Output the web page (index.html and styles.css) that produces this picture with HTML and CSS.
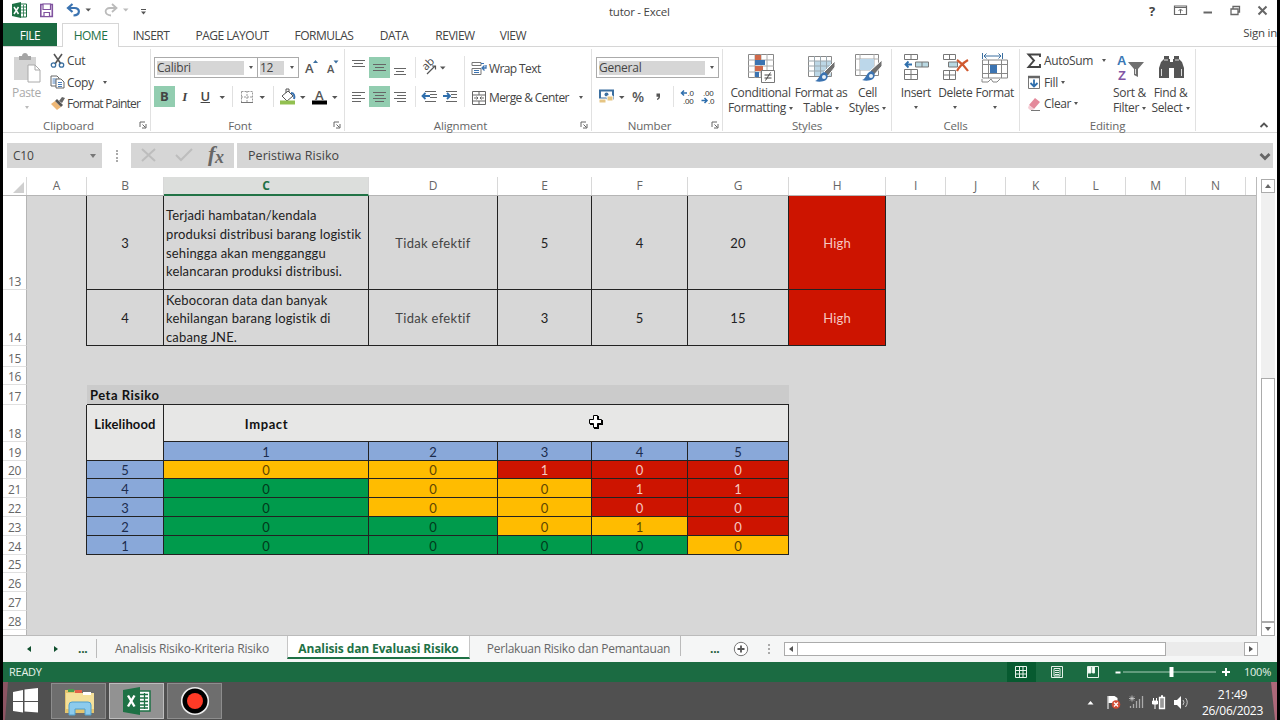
FILE: index.html
```html
<!DOCTYPE html>
<html lang="en">
<head>
  <meta charset="utf-8">
  <title>tutor - Excel</title>
  <link rel="stylesheet" href="styles.css">
</head>
<body>
  <div class="screen">

    <!-- Title bar -->
    <div class="titlebar">
      <div class="quick-access">
        <svg width="200" height="23" viewBox="3 0 200 23">
          <path d="M20 4h6.500v13H20z" fill="#fff" stroke="#1e7145"/>
          <path d="M21 7h5M21 10h5M21 13h5M23.500 5v12" stroke="#1e7145" stroke-width=".8"/>
          <path d="M12 4l9-2v16l-9-2z" fill="#1e7145"/>
          <path d="M14 7l4.500 7M18.500 7L14 14" stroke="#fff" stroke-width="1.500"/>
          <path d="M40.800 4.500h11.500v12H40.800z" fill="#fff" stroke="#80539f" stroke-width="1.600"/>
          <path d="M43 4h7.500v5.500H43zM44 12.500h5.500v4H44z" fill="#fff" stroke="#80539f" stroke-width="1.200"/>
          <path d="M72.500 4l-4.500 4 4.500 4M68.500 8h6c6 0 6 7-1 7.500" fill="none" stroke="#3b73b1" stroke-width="2.200"/>
          <path d="M85.500 8.500h5.500l-2.700 3z" fill="#555"/>
          <path d="M112 4l4.500 4-4.500 4M116 8h-6c-6 0-6 7 1 7.500" fill="none" stroke="#bbb" stroke-width="1.800"/>
          <path d="M123 8.500h5.500l-2.700 3z" fill="#bbb"/>
          <path d="M141 9.500h5" stroke="#555"/>
          <path d="M141 11.500h5l-2.500 3z" fill="#555"/>
        </svg>
      </div>
      <div class="title">tutor - Excel</div>
      <div class="window-buttons">
        <span class="help">?</span>
        <svg width="108" height="23" viewBox="1170 0 108 23" fill="none" stroke="#666">
          <path d="M1175.500 6h12v8.500h-12zM1175 7.500h13" stroke-width="1.200"/>
          <path d="M1181.500 13.500v-4M1179.500 11l2-2 2 2"/>
          <path d="M1204.500 12.500h8.500" stroke-width="2"/>
          <path d="M1232 9h7v5.500h-7zM1234 9V6.500h6.500V12H1239" stroke-width="1.300"/>
          <path d="M1259.500 6.500l8 8M1267.500 6.500l-8 8" stroke-width="2"/>
        </svg>
      </div>
    </div>

    <!-- Ribbon tabs -->
    <div class="tabs">
      <div class="tab file">FILE</div>
      <div class="tab home">HOME</div>
      <div class="tab insert">INSERT</div>
      <div class="tab page">PAGE LAYOUT</div>
      <div class="tab formulas">FORMULAS</div>
      <div class="tab data">DATA</div>
      <div class="tab review">REVIEW</div>
      <div class="tab view">VIEW</div>
      <div class="sign-in">Sign in</div>
    </div>

    <!-- Ribbon -->
    <div class="ribbon">
      <div class="group clipboard">
        <div class="group-body">
          <div class="big-button paste">
            <svg width="30" height="32" viewBox="0 0 30 32">
              <path d="M2 5h22v23H2z" fill="#d4d4d4"/>
              <path d="M7 8V4h3c0-4 6-4 6 0h3v4z" fill="#a5a5a5"/>
              <path d="M16 13h7l5 5v12H16z" fill="#fff" stroke="#aaa"/>
              <path d="M23 13v5h5" fill="none" stroke="#aaa"/>
            </svg>
            <span>Paste</span>
            <i class="arrow light"></i>
          </div>
          <div class="list">
            <div class="item">
              <svg width="16" height="16" viewBox="0 0 16 16" fill="none">
                <path d="M4 1l7 10M12 1L5 11" stroke="#555" stroke-width="1.600"/>
                <circle cx="3.500" cy="12" r="2.200" stroke="#3b6fa0" stroke-width="1.300"/>
                <circle cx="11.500" cy="12" r="2.200" stroke="#3b6fa0" stroke-width="1.300"/>
              </svg>
              <span>Cut</span>
            </div>
            <div class="item">
              <svg width="16" height="16" viewBox="0 0 16 16">
                <path d="M1 2h6l2 2v8H1z" fill="#fff" stroke="#666"/>
                <path d="M2.500 5h4M2.500 7h4M2.500 9h4" stroke="#4a7ebb"/>
                <path d="M6 5h5l3 3v6H6z" fill="#fff" stroke="#666"/>
                <path d="M8 8.500h4M8 10.500h4M8 12.500h4" stroke="#4a7ebb"/>
              </svg>
              <span>Copy</span>
              <i class="arrow"></i>
            </div>
            <div class="item">
              <svg width="16" height="16" viewBox="0 0 16 16">
                <path d="M1 8l4-3 6 6-4 3z" fill="#eeb877"/>
                <path d="M5 5l2-2 6 6-2 2z" fill="#555"/>
                <path d="M9 5l3-4 3 1-3 5z" fill="#666"/>
              </svg>
              <span class="painter">Format Painter</span>
            </div>
          </div>
        </div>
        <div class="group-label">Clipboard</div>
        <svg class="launcher" width="8" height="8"><path d="M1 6V1h5M3.500 3.500l3 3M7 3v4H3" fill="none" stroke="#666"/></svg>
      </div>

      <div class="group font">
        <div class="group-body rows">
          <div class="line">
            <div class="combo font-name"><span>Calibri</span><i class="arrow"></i></div>
            <div class="combo font-size"><span>12</span><i class="arrow"></i></div>
            <svg width="42" height="21" viewBox="0 0 42 21">
              <text x="6" y="16" class="glyph-a">A</text>
              <path d="M14 6h5l-2.500-3z" fill="#3b6fa0"/>
              <text x="28" y="16" class="glyph-a small">A</text>
              <path d="M34.500 3.500h5L37 6.500z" fill="#3b6fa0"/>
            </svg>
          </div>
          <div class="line">
            <span class="toggle on bold">B</span>
            <span class="toggle italic">I</span>
            <span class="toggle underline">U</span>
            <svg width="122" height="21" viewBox="215 86 122 21">
              <path d="M218.500 96h5.500l-2.700 3zM258.500 96h5.500l-2.700 3zM299 96h5.500l-2.700 3zM331 96h5.500l-2.700 3z" fill="#555"/>
              <path d="M231.500 86v21M272.500 86v21" stroke="#e0e0e0"/>
              <path d="M240.500 91.500h11v11h-11zM246 91v12M240 97h12" fill="none" stroke="#999" stroke-dasharray="2 1"/>
              <path d="M240 102.500h12" stroke="#777"/>
              <path d="M281 96l6-5 5 5-6 5z" fill="#fff" stroke="#555"/>
              <path d="M285 93v-4h3v3" fill="none" stroke="#555"/>
              <path d="M290 93c3 0 4 3 3 6" fill="none" stroke="#3b73b1" stroke-width="2"/>
              <path d="M279 100.500h15v4h-15z" fill="#92c050"/>
              <path d="M311 100.500h15v4h-15z" fill="#000"/>
              <text x="314" y="100" class="glyph-a">A</text>
            </svg>
          </div>
        </div>
        <div class="group-label">Font</div>
        <svg class="launcher" width="8" height="8"><path d="M1 6V1h5M3.500 3.500l3 3M7 3v4H3" fill="none" stroke="#666"/></svg>
      </div>

      <div class="group alignment">
        <div class="group-body">
          <svg width="126" height="60" viewBox="345 49 126 60">
            <path d="M369 57h21v21h-21zM369 86h21v21h-21z" fill="#92cdb0"/>
            <g stroke="#666">
              <path d="M352 60.500h13M354 63.500h9M352 66.500h13"/>
              <path d="M373 64.500h13M375 67.500h9M373 70.500h13"/>
              <path d="M394 68.500h12M396 71.500h8M394 74.500h12"/>
              <path d="M352 92.500h13M352 95.500h9M352 98.500h13M352 101.500h9"/>
              <path d="M373 92.500h13M375 95.500h9M373 98.500h13M375 101.500h9"/>
              <path d="M394 92.500h12M397 95.500h9M394 98.500h12M397 101.500h9"/>
              <path d="M425 91.500h11M430 94.500h7M430 97.500h7M425 101.500h11"/>
              <path d="M446 91.500h11M451 94.500h6M451 97.500h6M446 101.500h11"/>
            </g>
            <path d="M415.500 57v21M415.500 86v21M464.500 56v51" stroke="#e2e2e2"/>
            <text x="0" y="0" class="glyph-ab" transform="translate(426 71) rotate(-45)">ab</text>
            <path d="M427 74l8-8M432 66h3.500v3.500" fill="none" stroke="#555" stroke-width="1.200"/>
            <path d="M440 66.500h5.500l-2.700 3z" fill="#555"/>
            <path d="M430 96h-7M425.500 93l-3 3 3 3M443 96h7M447 93l3 3-3 3" fill="none" stroke="#2f6fad" stroke-width="1.800"/>
          </svg>
          <div class="list wide">
            <div class="item">
              <svg width="17" height="18" viewBox="0 0 17 18" fill="none">
                <path d="M1 2.500h9v3H1zM1 8.500h9v6H1z" stroke="#777"/>
                <path d="M3 10.500h5M3 12.500h5M10 3.500h3" stroke="#3b73b1"/>
                <path d="M15 5v3h-4M13.500 5.500L11 8l2.500 2.500" stroke="#3b73b1" stroke-width="1.300"/>
              </svg>
              <span>Wrap Text</span>
            </div>
            <div class="item">
              <svg width="17" height="18" viewBox="0 0 17 18" fill="none" stroke="#666">
                <path d="M1.500 2.500h13v13h-13zM1.500 6h13M1.500 12h13M8 2.500V6M8 12v3.500"/>
                <path d="M3 9h4M13 9H9M5.500 7.500L7 9l-1.500 1.500M10.500 7.500L9 9l1.500 1.500"/>
              </svg>
              <span class="merge">Merge &amp; Center</span>
              <i class="arrow"></i>
            </div>
          </div>
        </div>
        <div class="group-label">Alignment</div>
        <svg class="launcher" width="8" height="8"><path d="M1 6V1h5M3.500 3.500l3 3M7 3v4H3" fill="none" stroke="#666"/></svg>
      </div>

      <div class="group number">
        <div class="group-body rows">
          <div class="line">
            <div class="combo format"><span>General</span><i class="arrow"></i></div>
          </div>
          <div class="line">
            <svg width="122" height="21" viewBox="596 86 122 21">
              <path d="M600 90.500h13v8h-13z" fill="#fff" stroke="#3b6fa0" stroke-width="2"/>
              <circle cx="606.500" cy="94.500" r="2" fill="#3b6fa0"/>
              <path d="M599 99h7v4h-7zM607 96h6v5h-6z" fill="#e6c583" stroke="#fff"/>
              <path d="M619 96h5.500l-2.700 3z" fill="#555"/>
              <text x="632" y="102" class="percent">%</text>
              <path d="M656.500 93.500h3.500v3q0 2.500-3 3.500v-1.200q1.500-.6 1.500-2h-2z" fill="#555"/>
              <path d="M673.500 86v21" stroke="#e2e2e2"/>
              <text x="687.500" y="96" class="digits">.0</text>
              <text x="683" y="104" class="digits">.00</text>
              <text x="703" y="96" class="digits">.00</text>
              <text x="708" y="104" class="digits">.0</text>
              <path d="M687 93h-5M684 90.500L681.500 93l2.500 2.500M701.500 100.500h5M704.500 98l2.500 2.500-2.500 2.500" fill="none" stroke="#2f6fad" stroke-width="1.500"/>
            </svg>
          </div>
        </div>
        <div class="group-label">Number</div>
        <svg class="launcher" width="8" height="8"><path d="M1 6V1h5M3.500 3.500l3 3M7 3v4H3" fill="none" stroke="#666"/></svg>
      </div>

      <div class="group styles">
        <div class="group-body">
          <div class="big-button conditional">
            <svg width="30" height="32" viewBox="0 0 30 32">
              <path d="M2.500 2.500h25v23h-25z" fill="#fff" stroke="#888"/>
              <path d="M2 8h26M2 14h26M2 20h26M9 2v24M15 2v24M21 2v24" stroke="#aaa"/>
              <path d="M9 3h6v5H9zM9 14h8v5H9z" fill="#d0694a"/>
              <path d="M9 8h10v5H9zM9 20h4v5H9z" fill="#3b73b1"/>
              <path d="M15.500 18.500h13v12h-13z" fill="#fff" stroke="#777"/>
              <path d="M18.500 23h7M18.500 26h7M24.500 20.500l-5 8" stroke="#444"/>
            </svg>
            <span>Conditional<br>Formatting<i class="arrow"></i></span>
          </div>
          <div class="big-button as-table">
            <svg width="30" height="32" viewBox="0 0 30 32">
              <path d="M2.500 4.500h23v20h-23z" fill="#fff" stroke="#888"/>
              <path d="M9 9h16v15H9z" fill="#bcd7e6"/>
              <path d="M2 9h24M2 14h24M2 19h24M8.500 4v20M14.500 4v20M20.500 4v20" stroke="#9aa7ae"/>
              <path d="M29 9v6l-7 9-4-4z" fill="#707070" stroke="#fff"/>
              <path d="M18 20c4 1 5 5 2 8-3 2-8 2-11 1 4-1 4-7 9-9z" fill="#3b73b1"/>
              <circle cx="18" cy="25" r="2" fill="#e8f1f8"/>
            </svg>
            <span>Format as<br>Table<i class="arrow"></i></span>
          </div>
          <div class="big-button cell-styles">
            <svg width="30" height="32" viewBox="0 0 30 32">
              <path d="M2.500 2.500h23v21h-23z" fill="#fff" stroke="#888"/>
              <path d="M2 7h24M2 18h24M7 2v22M21 2v22" stroke="#aaa"/>
              <path d="M7 7h14v11H7z" fill="#bcd7ea"/>
              <path d="M29 8v6l-8 9-4-4z" fill="#707070" stroke="#fff"/>
              <path d="M18 19c4 1 5 5 2 8-3 2-8 2-11 1 4-1 4-7 9-9z" fill="#3b73b1"/>
              <circle cx="18" cy="24" r="2" fill="#e8f1f8"/>
            </svg>
            <span>Cell<br>Styles<i class="arrow"></i></span>
          </div>
        </div>
        <div class="group-label">Styles</div>
      </div>

      <div class="group cells">
        <div class="group-body">
          <div class="big-button">
            <svg width="30" height="32" viewBox="0 0 30 32" fill="none" stroke="#777">
              <path d="M3.500 2.500h13v5h-13zM10 2.500v5M3.500 17.500h13v10h-13zM3.500 22.500h13M10 17.500v10"/>
              <path d="M14.500 10h13v5h-13z" fill="#b9d8e2"/><path d="M21 10v5"/>
              <path d="M11 12.500H4.500M7.500 9.500l-3 3 3 3" stroke="#2f6fad" stroke-width="1.800"/>
            </svg>
            <span>Insert</span>
            <i class="arrow"></i>
          </div>
          <div class="big-button">
            <svg width="30" height="32" viewBox="0 0 30 32" fill="none" stroke="#777">
              <path d="M3.500 2.500h12v5h-12zM9.500 2.500v5M3.500 18.500h12v9h-12zM3.500 23h12M9.500 18.500v9"/>
              <path d="M8.500 10h9v5h-9z" fill="#b9d8e2"/>
              <path d="M17 8c3 2 9 8 11 11M28 8c-5 3-9 7-11 11" stroke="#d0592f" stroke-width="2.200"/>
            </svg>
            <span>Delete</span>
            <i class="arrow"></i>
          </div>
          <div class="big-button">
            <svg width="30" height="32" viewBox="0 0 30 32" fill="none" stroke="#888">
              <path d="M2.500 8h25v18h-25zM2.500 12.500h25M2.500 21.500h25M8.500 8v18M21.500 8v18"/>
              <path d="M10 13h7v8h-7z" fill="#3b73b1" stroke="none"/>
              <path d="M2 27v3h6l3-3 2 3h4l3-3"/>
              <path d="M2.500 1v6M22.500 1v6M4 4h17M6.500 1.500L4 4l2.500 2.500M18.500 1.500L21 4l-2.500 2.500" stroke="#3b6fa0"/>
            </svg>
            <span>Format</span>
            <i class="arrow"></i>
          </div>
        </div>
        <div class="group-label">Cells</div>
      </div>

      <div class="group editing">
        <div class="group-body">
          <div class="list">
            <div class="item">
              <svg width="16" height="16" viewBox="0 0 16 16"><path d="M14 4V1.500H2.500L8 7.500l-5.500 6.500H14v-3" fill="none" stroke="#444" stroke-width="1.900"/></svg>
              <span class="autosum">AutoSum</span>
              <i class="arrow"></i>
            </div>
            <div class="item">
              <svg width="16" height="16" viewBox="0 0 16 16" fill="none">
                <path d="M2.500 2.500h11v12h-11z" stroke="#777"/><path d="M2 3h12" stroke="#666" stroke-width="2.500"/>
                <path d="M8 5.500v7M4.500 9L8 12.500 11.500 9" stroke="#2f6fad" stroke-width="1.800"/>
              </svg>
              <span>Fill</span>
              <i class="arrow near"></i>
            </div>
            <div class="item">
              <svg width="16" height="16" viewBox="0 0 16 16">
                <path d="M3 9l6-7 5 4-6 7z" fill="#e4899b"/><path d="M3 9l5 4-1 1H4l-2-2z" fill="#f6cdd5"/>
                <path d="M5 14.500h9" stroke="#777"/>
              </svg>
              <span>Clear</span>
              <i class="arrow near"></i>
            </div>
          </div>
          <div class="big-button sort">
            <svg width="30" height="32" viewBox="0 0 30 32">
              <text x="2" y="13" class="sort-letter a">A</text>
              <text x="3" y="28" class="sort-letter z">Z</text>
              <path d="M13 10h16l-6 7v8l-4-2v-6z" fill="#707070"/>
              <path d="M20.500 17v5" stroke="#ddd"/>
            </svg>
            <span>Sort &amp;<br>Filter<i class="arrow"></i></span>
          </div>
          <div class="big-button find">
            <svg width="30" height="32" viewBox="0 0 30 32">
              <path d="M8 4h5v3h1v3h3V7h1V4h5v3l3 3 2 6v10H18V16h-5v10H3V16l2-6 3-3z" fill="#555"/>
              <path d="M5.500 17v7M25.500 17v7M8 8h4M19 8h4" stroke="#ddd"/>
            </svg>
            <span>Find &amp;<br>Select<i class="arrow"></i></span>
          </div>
        </div>
        <div class="group-label">Editing</div>
      </div>
      <svg class="collapse" width="10" height="8"><path d="M1.500 6L5 2.500 8.500 6" fill="none" stroke="#555" stroke-width="1.800"/></svg>
    </div>

    <!-- Formula bar -->
    <div class="formula-bar">
      <div class="name-box"><span>C10</span><i class="arrow big"></i></div>
      <div class="dots"></div>
      <div class="fx">
        <svg width="69" height="24" viewBox="0 0 69 24" fill="none" stroke="#bdbdbd" stroke-width="2">
          <path d="M3 6l13 12M16 6L3 18M37 12l5 5L53 6"/>
        </svg>
        <span>f<sub>x</sub></span>
      </div>
      <div class="formula-input">
        <span>Peristiwa Risiko</span>
        <svg width="12" height="10"><path d="M1.500 3L6 7.500 10.500 3" fill="none" stroke="#666" stroke-width="2.800"/></svg>
      </div>
    </div>

    <!-- Worksheet -->
    <div class="sheet">
      <div class="grid">
        <div class="col-heads">
          <div class="corner"><svg width="11" height="11"><path d="M11 0v11H0z" fill="#cfcfcf"/></svg></div>
          <div class="a">A</div><div class="b">B</div><div class="c selected">C</div><div class="d">D</div>
          <div class="e">E</div><div class="f">F</div><div class="g">G</div><div class="h">H</div>
          <div class="i">I</div><div class="i">J</div><div class="i">K</div><div class="i">L</div><div class="i">M</div><div class="i">N</div>
        </div>
        <div class="row r13">
          <div class="num">13</div><div class="a edge"></div>
          <div class="cell b">3</div>
          <div class="cell c text">Terjadi hambatan/kendala<br>produksi distribusi barang logistik<br>sehingga akan mengganggu<br>kelancaran produksi distribusi.</div>
          <div class="cell d soft">Tidak efektif</div><div class="cell e">5</div><div class="cell f">4</div><div class="cell g">20</div><div class="cell h red">High</div>
        </div>
        <div class="row r14">
          <div class="num">14</div><div class="a edge"></div>
          <div class="cell b">4</div>
          <div class="cell c text">Kebocoran data dan banyak<br>kehilangan barang logistik di<br>cabang JNE.</div>
          <div class="cell d soft">Tidak efektif</div><div class="cell e">3</div><div class="cell f">5</div><div class="cell g">15</div><div class="cell h red">High</div>
        </div>
        <div class="row r15"><div class="num">15</div></div>
        <div class="row short"><div class="num">16</div></div>
        <div class="row r17">
          <div class="num">17</div><div class="a"></div>
          <div class="map-title">Peta Risiko</div>
        </div>
        <div class="row r18">
          <div class="num">18</div><div class="a edge"></div>
          <div class="cell b head open">Likelihood</div><div class="cell c head no-right">Impact</div><div class="cell head rest"></div>
        </div>
        <div class="row">
          <div class="num">19</div><div class="a edge"></div>
          <div class="cell b head"></div><div class="cell c blue">1</div><div class="cell d blue">2</div><div class="cell e blue">3</div><div class="cell f blue">4</div><div class="cell g blue">5</div>
        </div>
        <div class="row short">
          <div class="num">20</div><div class="a edge"></div>
          <div class="cell b blue">5</div><div class="cell c yellow">0</div><div class="cell d yellow">0</div><div class="cell e red">1</div><div class="cell f red">0</div><div class="cell g red">0</div>
        </div>
        <div class="row">
          <div class="num">21</div><div class="a edge"></div>
          <div class="cell b blue">4</div><div class="cell c green">0</div><div class="cell d yellow">0</div><div class="cell e yellow">0</div><div class="cell f red">1</div><div class="cell g red">1</div>
        </div>
        <div class="row">
          <div class="num">22</div><div class="a edge"></div>
          <div class="cell b blue">3</div><div class="cell c green">0</div><div class="cell d yellow">0</div><div class="cell e yellow">0</div><div class="cell f red">0</div><div class="cell g red">0</div>
        </div>
        <div class="row">
          <div class="num">23</div><div class="a edge"></div>
          <div class="cell b blue">2</div><div class="cell c green">0</div><div class="cell d green">0</div><div class="cell e yellow">0</div><div class="cell f yellow">1</div><div class="cell g red">0</div>
        </div>
        <div class="row">
          <div class="num">24</div><div class="a edge"></div>
          <div class="cell b blue">1</div><div class="cell c green">0</div><div class="cell d green">0</div><div class="cell e green">0</div><div class="cell f green">0</div><div class="cell g yellow">0</div>
        </div>
        <div class="row short"><div class="num">25</div></div>
        <div class="row"><div class="num">26</div></div>
        <div class="row"><div class="num">27</div></div>
        <div class="row"><div class="num">28</div></div>
        <div class="row last"><div class="num"></div></div>
        <svg class="cursor" width="16" height="16" viewBox="0 0 16 16">
          <path d="M6 2h5v4h4v5h-4v4H6v-4H2V6h4z" fill="#000"/>
          <path d="M5.500 1.500h4v4h4v4h-4v4h-4v-4h-4v-4h4z" fill="#fff" stroke="#000"/>
        </svg>
      </div>
      <div class="vscroll">
        <div class="scroll-button"><i class="up"></i></div>
        <div class="track"></div>
        <div class="thumb"></div>
        <div class="scroll-button"><i class="down"></i></div>
      </div>
    </div>

    <!-- Sheet tabs -->
    <div class="sheet-tabs">
      <div class="nav">
        <i class="left"></i><i class="right"></i><b>...</b>
      </div>
      <div class="sheet-tab first">Analisis Risiko-Kriteria Risiko</div>
      <div class="sheet-tab active">Analisis dan Evaluasi Risiko</div>
      <div class="sheet-tab third">Perlakuan Risiko dan Pemantauan</div>
      <b class="more">...</b>
      <svg class="add" width="16" height="16"><circle cx="8" cy="8" r="6.700" fill="#fff" stroke="#777"/><path d="M4.500 8h7M8 4.500v7" stroke="#555" stroke-width="1.800"/></svg>
      <div class="dots"></div>
      <div class="hscroll">
        <div class="scroll-button"><i class="left"></i></div>
        <div class="hthumb"></div>
        <div class="scroll-button"><i class="right"></i></div>
      </div>
    </div>

    <!-- Status bar -->
    <div class="status-bar">
      <span>READY</span>
      <svg width="230" height="20" viewBox="1007 662 230 20" fill="none" stroke="#e6f2ea">
        <path d="M1007 662h29v20h-29z" fill="#075a30" stroke="none"/>
        <path d="M1015.500 666.500h11v11h-11zM1019.500 666v12M1023 666v12M1015 670.500h12M1015 674h12"/>
        <path d="M1051.500 666.500h11v11h-11zM1054 668.500h6v7.500h-6zM1055 670.500h4M1055 672.500h4M1055 674.500h4"/>
        <path d="M1087.500 666.500h11v11h-11z"/><path d="M1088 667h3v6h-3zM1092.500 667h2v6h-2z" fill="#fff"/>
        <path d="M1115.500 672.500h5" stroke="#fff" stroke-width="2"/><path d="M1123 672h93" stroke="#a9cdb8"/>
        <path d="M1169.500 667h4v10h-4z" fill="#fff" stroke="none"/>
        <path d="M1222 672h8M1226 668v8" stroke="#fff" stroke-width="2"/>
      </svg>
      <span class="zoom">100%</span>
    </div>

    <!-- Taskbar -->
    <div class="taskbar">
      <svg class="start" width="48" height="38" viewBox="3 682 48 38">
        <path d="M3 682h5l-3 38H3z" fill="#8c5563"/>
        <path d="M13 692l10-2v11H13zM24.500 689.500L38 688v13H24.500zM13 702h10v10.500L13 711zM24.500 702H38v10.500l-13.500-1z" fill="#fff"/>
      </svg>
      <div class="task">
        <svg width="32" height="32" viewBox="0 0 32 32">
          <path d="M2 5h9l2 3h18v20H2z" fill="#e5c56d"/>
          <path d="M3 8h28v16H3z" fill="#f4e09a"/>
          <path d="M5 4h6v3H5z" fill="#4c9d50"/><path d="M12 5h7v3h-7z" fill="#e36148"/><path d="M20 7h8v3h-8z" fill="#fff"/>
          <path d="M6 30V20q0-3 3-3h16q3 0 3 3v10h-6v-6h-10v6z" fill="#8ccbed" stroke="#4e9fce"/>
        </svg>
      </div>
      <div class="task current">
        <svg width="32" height="32" viewBox="0 0 32 32">
          <path d="M17 6h12v20H17z" fill="#fff" stroke="#1e7145" stroke-width="1.500"/>
          <path d="M19 9.500h8M19 13h8M19 16.500h8M19 20h8M19 23h8M23.500 8v16" stroke="#1e7145" stroke-width="1.300"/>
          <path d="M2 5l17-3v28L2 27z" fill="#1e7145"/>
          <path d="M7 10.500l6.500 11M13.500 10.500L7 21.500" stroke="#fff" stroke-width="2.400"/>
        </svg>
      </div>
      <div class="task">
        <svg width="32" height="32" viewBox="0 0 32 32">
          <circle cx="16" cy="16" r="13.300" fill="#000" stroke="#eee" stroke-width="1.600"/>
          <circle cx="16" cy="16" r="8" fill="#ff3a26"/>
        </svg>
      </div>
      <svg class="tray" width="110" height="38" viewBox="1084 682 110 38">
        <path d="M1087.500 704.500h6l-3-3.500z" fill="#fff"/>
        <path d="M1108 696v13" stroke="#fff"/><path d="M1108.500 696h6l3 2v5h-9z" fill="#fff"/>
        <circle cx="1116" cy="704.500" r="4.300" fill="#d24c34"/><path d="M1114 702.500l4 4M1118 702.500l-4 4" stroke="#fff" stroke-width="1.300"/>
        <path d="M1130.500 706v2M1133.500 704v4M1136.500 701v7M1139.500 699v9M1142.500 696v12" stroke="#aaa" stroke-width="1.300"/>
        <path d="M1129 698.500h6M1132 695.500v6M1130 696.500l4 4M1134 696.500l-4 4" stroke="#ccc" stroke-width=".8"/>
        <path d="M1159.500 697.500h5v11h-5zM1161 696h2" fill="#999" stroke="#fff" stroke-width="1.300"/>
        <path d="M1152.500 701h5v3h-5zM1155 704v5M1153.500 698v3M1156.500 698v3" fill="#fff" stroke="#fff"/>
        <path d="M1174 700h3l4-4v13l-4-4h-3z" fill="#fff"/>
        <path d="M1183 700q2 2 0 5M1185.500 698q3.500 4 0 9" fill="none" stroke="#ccc"/>
      </svg>
      <div class="clock">21:49<br>26/06/2023</div>
      <svg class="corner-edge" width="6" height="38"><path d="M0 0h6v38H4z" fill="#ad6879"/></svg>
    </div>
  </div>
</body>
</html>
```

FILE: styles.css
```css
* {
  box-sizing: border-box;
}

body {
  margin: 0;
  width: 1280px;
  height: 720px;
  overflow: hidden;
  background: #000;
  font-family: 'Open Sans', 'Noto Sans', sans-serif;
  font-size: 12px;
  letter-spacing: -0.25px;
  color: #444;
}

.screen {
  width: 1274px;
  height: 720px;
  margin-left: 3px;
  background: #fff;
  display: flex;
  flex-direction: column;
  white-space: nowrap;
}

svg {
  display: block;
  flex: none;
}

.arrow {
  display: inline-block;
  flex: none;
  border: 2.5px solid transparent;
  border-top: 3px solid #555;
  border-bottom: 0;
  vertical-align: 2px;
}

.arrow.light {
  border-top-color: #bbb;
}

.arrow.big {
  border-width: 4px 3.5px 0;
  border-top-color: #777;
}

/* Title bar */
.titlebar {
  height: 23px;
  display: flex;
}

.title {
  flex: 1;
  padding-left: 406px;
  line-height: 24px;
  font-size: 11.5px;
}

.window-buttons {
  display: flex;
  font-weight: 700;
  font-size: 13px;
  line-height: 22px;
}

.help {
  width: 20px;
}

/* Ribbon tabs */
.tabs {
  height: 24px;
  display: flex;
  border-bottom: 1px solid #d6d6d6;
  line-height: 25px;
}

.tab {
  text-align: center;
  letter-spacing: -0.5px;
}

.tab.file {
  width: 54px;
  margin-right: 5px;
  background: #1b6b42;
  color: #fff;
}

.tab.home {
  width: 57px;
  height: 24px;
  border: 1px solid #d6d6d6;
  border-bottom: 0;
  background: #fff;
  color: #1e7145;
  line-height: 23px;
}

.tab.insert { width: 64px; }
.tab.page { width: 98px; }
.tab.formulas { width: 86px; }
.tab.data { width: 54px; }
.tab.review { width: 68px; }
.tab.view { width: 48px; }

.sign-in {
  margin-left: auto;
  font-size: 11.5px;
  line-height: 20px;
}

/* Ribbon */
.ribbon {
  height: 87px;
  display: flex;
  border-bottom: 1px solid #d6d6d6;
  position: relative;
}

.group {
  height: 82px;
  margin-top: 2px;
  border-right: 1px solid #e1e1e1;
  position: relative;
}

.clipboard { width: 148px; }
.font { width: 194px; }
.alignment { width: 247px; }
.number { width: 131px; }
.styles { width: 169px; }
.cells { width: 128px; }
.editing { width: 176px; }

.group-body {
  height: 69px;
  display: flex;
}

.group-body.rows {
  flex-direction: column;
  gap: 8px;
  padding: 8px 0 0 3px;
}

.group-body.rows .line:last-child {
  height: 21px;
}

.number .group-body.rows {
  padding-left: 4px;
}

.group-label {
  height: 14px;
  line-height: 16px;
  text-align: center;
  color: #666;
  font-size: 11.5px;
  letter-spacing: -0.15px;
}

.clipboard .group-label {
  padding-right: 16px;
}

.font .group-label,
.alignment .group-label,
.number .group-label {
  padding-right: 15px;
}

.launcher {
  position: absolute;
  right: 3px;
  bottom: 2px;
}

.big-button {
  display: flex;
  flex-direction: column;
  align-items: center;
  text-align: center;
  line-height: 15px;
  padding-top: 3px;
}

.big-button > span {
  margin-top: 1px;
  letter-spacing: -0.35px;
}

.big-button span .arrow {
  margin-left: 3px;
}

.big-button > .arrow {
  margin-top: 6px;
}

.paste {
  width: 47px;
  color: #aaa;
}

.list {
  padding-top: 1px;
}

.item {
  display: flex;
  align-items: center;
  height: 21.5px;
  letter-spacing: -0.35px;
}

.item span {
  margin-left: 1px;
}

.item .painter {
  letter-spacing: -0.75px;
}

.item .arrow {
  margin-left: 9px;
}

.item .arrow.near {
  margin-left: 3px;
}

.list.wide {
  padding-top: 5px;
}

.list.wide .item {
  height: 29px;
  letter-spacing: -0.6px;
}

.list.wide .item .arrow {
  margin-left: 10px;
}

.line {
  height: 21px;
  display: flex;
}

.combo {
  height: 21px;
  border: 1px solid #ababab;
  display: flex;
  align-items: center;
  justify-content: space-between;
  padding-right: 4px;
}

.combo span {
  height: 14px;
  line-height: 14px;
  background: #d6d6d6;
  margin-left: 2px;
}

.font-name { width: 104px; }
.font-name span { width: 87px; }
.font-size { width: 42px; margin-left: -1px; }
.font-size span { width: 24px; }
.format { width: 123px; }
.format span { width: 106px; }

.toggle {
  width: 20.5px;
  height: 21px;
  line-height: 21px;
  text-align: center;
  font-size: 13px;
}

.toggle.on {
  background: #92cdb0;
}

.bold {
  font-weight: 700;
}

.italic {
  font-family: 'Liberation Serif', serif;
  font-style: italic;
  font-weight: 700;
}

.underline {
  text-decoration: underline;
  font-weight: 600;
}

.glyph-a {
  font-size: 13px;
  font-weight: 600;
  fill: #555;
}

.glyph-a.small {
  font-size: 11px;
}

.glyph-ab {
  font-size: 11px;
  fill: #444;
}

.percent {
  font-size: 14px;
  font-weight: 600;
  fill: #555;
}

.digits {
  font-family: 'Liberation Sans', sans-serif;
  font-size: 8px;
  font-weight: 400;
  fill: #333;
}

.conditional { width: 75px; }
.as-table { width: 46px; }
.cell-styles { width: 47px; }
.cells .group-body { padding-left: 4px; }
.cells .big-button { width: 39.5px; }
.editing .list { width: 87px; padding-left: 6px; }
.editing .item span { margin-left: 2px; }
.sort { width: 45px; }
.find { width: 37px; }

.sort-letter {
  font-family: 'Liberation Sans', sans-serif;
  font-size: 13px;
  font-weight: 700;
}

.sort-letter.a { fill: #3b78b5; }
.sort-letter.z { fill: #8257a5; }

.collapse {
  position: absolute;
  right: 8px;
  bottom: 3px;
}

/* Formula bar */
.formula-bar {
  height: 44px;
  padding: 10px 0 9px 4px;
  display: flex;
  line-height: 26px;
}

.name-box {
  width: 95px;
  background: #d6d6d6;
  display: flex;
  align-items: center;
  justify-content: space-between;
  padding: 0 6px;
}

.dots {
  width: 2px;
  height: 12px;
  margin: 7px 13px 0 14px;
  border-left: 2px dotted #aaa;
}

.fx {
  width: 103px;
  background: #d6d6d6;
  display: flex;
  padding-left: 8px;
}

.fx span {
  font: italic 700 22px/22px 'Liberation Serif', serif;
  color: #666;
}

.fx sub {
  font-size: 18px;
  vertical-align: -2px;
}

.formula-input {
  flex: 1;
  margin: 0 4px 0 3px;
  padding: 0 2px 0 11px;
  background: #d6d6d6;
  display: flex;
  justify-content: space-between;
  align-items: center;
  letter-spacing: 0.05px;
}

.formula-input span {
  font-size: 12.5px;
}

/* Worksheet */
.sheet {
  height: 459px;
  display: flex;
}

.grid {
  width: 1254px;
  height: 459px;
  background: #d7d7d7;
  border-right: 1px solid #bbb;
  border-bottom: 1px solid #bbb;
  position: relative;
  overflow: hidden;
}

.col-heads {
  height: 19px;
  display: flex;
  background: #fff;
  border-bottom: 1px solid #b5b5b5;
  color: #666;
  line-height: 18px;
  text-align: center;
}

.col-heads div {
  border-right: 1px solid #d8d8d8;
}

.col-heads .corner {
  width: 24px;
  padding: 5px 0 0 10px;
}

.col-heads .selected {
  height: 19px;
  background: #dcdedc;
  border-bottom: 2px solid #217346;
  color: #1e7145;
  font-weight: 700;
}

.a { width: 60px; }
.b { width: 77px; }
.c { width: 205px; }
.d { width: 129px; }
.e { width: 94px; }
.f { width: 96px; }
.g { width: 101px; }
.h { width: 97px; }
.i { width: 60px; }

.row {
  height: 19px;
  display: flex;
}

.row.r13 { height: 94px; }
.row.r14 { height: 56px; }
.row.r15 { height: 21px; }
.row.r17 { height: 20px; }
.row.r18 { height: 37px; }
.row.short { height: 18px; }
.row.last { height: 6px; }

.num {
  width: 24px;
  background: #fff;
  border-right: 1px solid #b5b5b5;
  border-bottom: 1px solid #e0e0e0;
  color: #666;
  display: flex;
  align-items: flex-end;
  justify-content: center;
  line-height: 15px;
}

.edge {
  border-right: 1px solid #222;
}

.cell {
  padding-top: 2px;
  border-right: 1px solid #222;
  border-bottom: 1px solid #222;
  display: flex;
  align-items: center;
  justify-content: center;
  font-family: Lato, 'Liberation Sans', sans-serif;
  font-size: 13px;
  letter-spacing: 0.15px;
  line-height: 18.7px;
  color: #222;
}

.cell.text {
  justify-content: flex-start;
  padding-left: 2px;
}

.cell.soft {
  color: #444;
  letter-spacing: 0.3px;
}

.cell.head {
  background: #e7e7e6;
  color: #111;
  font-weight: 700;
}

.cell.open { border-bottom: 0; }
.cell.no-right { border-right: 0; letter-spacing: 0.6px; }
.cell.rest { width: 420px; }

.cell.blue { background: #89a8d9; color: #1c2c4d; }
.cell.yellow { background: #ffbc00; color: #5e4500; }
.cell.green { background: #009b4c; color: #00391b; }
.cell.red { background: #cd1400; color: #f6c8c2; }

.map-title {
  width: 702px;
  padding-left: 3px;
  background: #cbcbcb;
  border-bottom: 1px solid #222;
  font: 700 13px/21px Lato, sans-serif;
  letter-spacing: 0.5px;
  color: #111;
}

.cursor {
  position: absolute;
  left: 585px;
  top: 237px;
}

.vscroll {
  width: 20px;
  padding: 2px 2px 0 4px;
  display: flex;
  flex-direction: column;
}

.scroll-button {
  width: 14px;
  height: 14px;
  border: 1px solid #ababab;
  background: #fff;
  display: flex;
  align-items: center;
  justify-content: center;
}

.up, .down, .left, .right {
  border: 3px solid transparent;
}

.up { border-bottom: 4px solid #666; border-top: 0; }
.down { border-top: 4px solid #666; border-bottom: 0; }
.left { border-right: 4px solid #555; border-left: 0; }
.right { border-left: 4px solid #555; border-right: 0; }

.track {
  height: 185px;
  background: #f0f0f0;
}

.thumb {
  height: 245px;
  border: 1px solid #ababab;
  background: #fff;
}

/* Sheet tabs */
.sheet-tabs {
  height: 26px;
  background: #f5f6f6;
  display: flex;
  line-height: 25px;
}

.nav {
  width: 94px;
  height: 19px;
  margin-top: 3px;
  padding-left: 24px;
  border-right: 1px solid #bbb;
  display: flex;
  align-items: center;
  color: #1e5c3c;
}

.nav .left { border-right-color: #0f4f2e; margin-right: 23px; }
.nav .right { border-left-color: #0f4f2e; margin-right: 20px; }

.sheet-tab {
  text-align: center;
  color: #666;
}

.sheet-tab.first {
  width: 190px;
  letter-spacing: -0.15px;
}

.sheet-tab.active {
  width: 183px;
  height: 23px;
  background: #fff;
  border: 1px solid #c6c6c6;
  border-top: 0;
  border-bottom: 2px solid #1e7145;
  color: #1e7145;
  font-weight: 700;
  letter-spacing: -0.12px;
}

.sheet-tab.third {
  width: 211px;
  height: 20px;
  border-right: 1px solid #bbb;
  margin-right: 29px;
  padding-left: 7px;
}

.more {
  width: 20px;
  color: #1e5c3c;
}

.add {
  margin: 5px 4px 0 3px;
}

.sheet-tabs .dots {
  height: 10px;
  margin: 8px 0 0 15px;
}

.hscroll {
  width: 474px;
  height: 14px;
  margin: 6px 0 0 14px;
  background: #ebebeb;
  display: flex;
}

.hthumb {
  width: 368px;
  margin-right: auto;
  border: 1px solid #ababab;
  border-left: 0;
  background: #fff;
}

.hthumb ~ .scroll-button,
.hscroll .scroll-button {
  flex: none;
}

/* Status bar */
.status-bar {
  height: 20px;
  background: #1b6b42;
  color: #e6f2ea;
  font-size: 11px;
  line-height: 20px;
  display: flex;
  padding: 0 6px;
}

.status-bar svg {
  margin-left: auto;
}

.zoom {
  width: 34px;
  text-align: right;
}

/* Taskbar */
.taskbar {
  height: 38px;
  background: #505050;
  color: #fff;
  display: flex;
}

.task {
  width: 55px;
  height: 36px;
  margin: 1px 3px 0 0;
  padding-top: 1px;
  border: 1px solid #8d8d8d;
  background: #6e6e6e;
  display: flex;
  justify-content: center;
}

.task.current {
  background: #929292;
  border-color: #bdbdbd;
}

.tray {
  margin-left: auto;
}

.clock {
  width: 77px;
  padding-top: 5px;
  text-align: center;
  line-height: 15.5px;
}
```
